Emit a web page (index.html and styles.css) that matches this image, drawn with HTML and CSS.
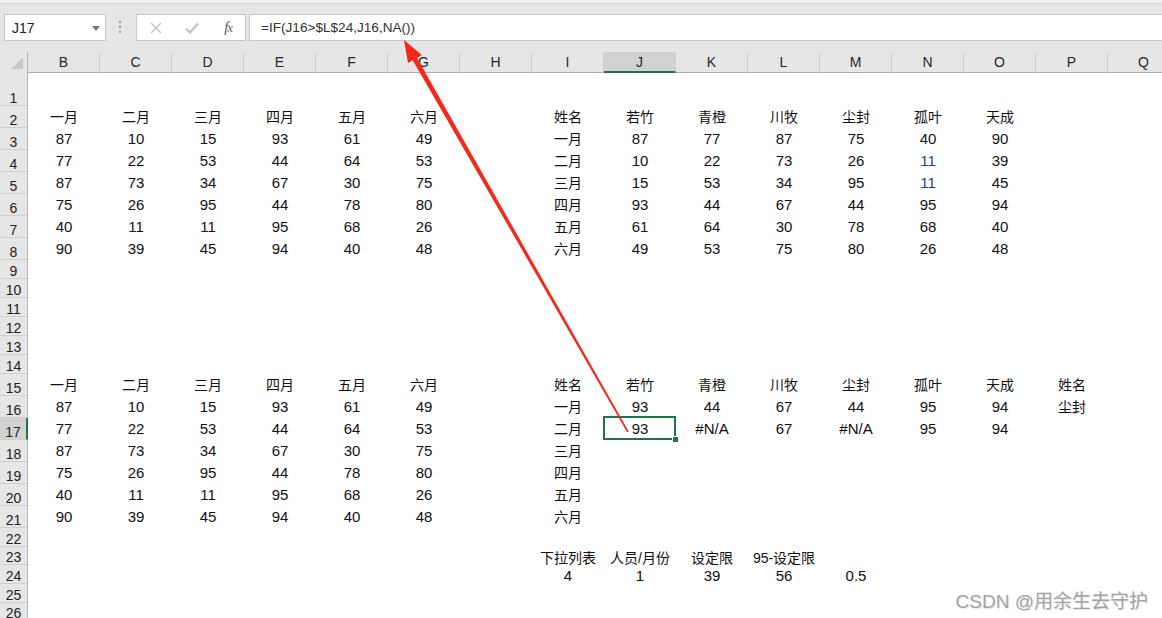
FILE: index.html
```html
<!DOCTYPE html>
<html lang="zh-CN">
<head>
<meta charset="utf-8">
<title>Excel</title>
<link rel="stylesheet" href="styles.css">
</head>
<body>
<div class="top"></div>
<div class="fbar">
  <div class="namebox"><span>J17</span><svg class="dd" width="8" height="5" viewBox="0 0 8 5"><polygon points="0,0 8,0 4,5" fill="#7a7a7a"/></svg></div>
  <svg class="dots" width="4" height="14" viewBox="0 0 4 14"><circle cx="2" cy="2" r="1.2" fill="#a0a0a0"/><circle cx="2" cy="7" r="1.2" fill="#a0a0a0"/><circle cx="2" cy="12" r="1.2" fill="#a0a0a0"/></svg>
  <div class="fxbox">
    <svg class="ic" width="12" height="12" viewBox="0 0 12 12"><path d="M1 1 L11 11 M11 1 L1 11" stroke="#bdbdbd" stroke-width="1.3" fill="none"/></svg>
    <svg class="ic" width="14" height="12" viewBox="0 0 14 12"><path d="M1 6.5 L5 10.5 L13 1.5" stroke="#c2c2c2" stroke-width="2.2" fill="none"/></svg>
    <span class="fx">f<span class="fxx">x</span></span>
  </div>
  <div class="formula">=IF(J16&gt;$L$24,J16,NA())</div>
</div>

<div class="sheet">
  <div class="row hdr">
    <div class="corner"><svg width="13" height="11" viewBox="0 0 13 11"><polygon points="0,11 12,0 12,11" fill="#c6c6c6"/></svg></div>
    <div class="ch">B</div><div class="ch">C</div><div class="ch">D</div><div class="ch">E</div><div class="ch">F</div><div class="ch">G</div><div class="ch">H</div><div class="ch">I</div><div class="ch hsel">J</div><div class="ch">K</div><div class="ch">L</div><div class="ch">M</div><div class="ch">N</div><div class="ch">O</div><div class="ch">P</div><div class="ch">Q</div>
  </div>
  <div class="row r35"><div class="rh">1</div></div>
  <div class="row r22"><div class="rh">2</div><span class="z">一月</span><span class="z">二月</span><span class="z">三月</span><span class="z">四月</span><span class="z">五月</span><span class="z">六月</span><span></span><span class="z">姓名</span><span class="z">若竹</span><span class="z">青橙</span><span class="z">川牧</span><span class="z">尘封</span><span class="z">孤叶</span><span class="z">天成</span></div>
  <div class="row r22"><div class="rh">3</div><span>87</span><span>10</span><span>15</span><span>93</span><span>61</span><span>49</span><span></span><span class="z">一月</span><span>87</span><span>77</span><span>87</span><span>75</span><span>40</span><span>90</span></div>
  <div class="row r22"><div class="rh">4</div><span>77</span><span>22</span><span>53</span><span>44</span><span>64</span><span>53</span><span></span><span class="z">二月</span><span>10</span><span>22</span><span>73</span><span>26</span><span class="blue">11</span><span>39</span></div>
  <div class="row r22"><div class="rh">5</div><span>87</span><span>73</span><span>34</span><span>67</span><span>30</span><span>75</span><span></span><span class="z">三月</span><span>15</span><span>53</span><span>34</span><span>95</span><span class="blue">11</span><span>45</span></div>
  <div class="row r22"><div class="rh">6</div><span>75</span><span>26</span><span>95</span><span>44</span><span>78</span><span>80</span><span></span><span class="z">四月</span><span>93</span><span>44</span><span>67</span><span>44</span><span>95</span><span>94</span></div>
  <div class="row r22"><div class="rh">7</div><span>40</span><span>11</span><span>11</span><span>95</span><span>68</span><span>26</span><span></span><span class="z">五月</span><span>61</span><span>64</span><span>30</span><span>78</span><span>68</span><span>40</span></div>
  <div class="row r22"><div class="rh">8</div><span>90</span><span>39</span><span>45</span><span>94</span><span>40</span><span>48</span><span></span><span class="z">六月</span><span>49</span><span>53</span><span>75</span><span>80</span><span>26</span><span>48</span></div>
  <div class="row r19"><div class="rh">9</div></div>
  <div class="row r19"><div class="rh">10</div></div>
  <div class="row r19"><div class="rh">11</div></div>
  <div class="row r19"><div class="rh">12</div></div>
  <div class="row r19"><div class="rh">13</div></div>
  <div class="row r19"><div class="rh">14</div></div>
  <div class="row r22"><div class="rh">15</div><span class="z">一月</span><span class="z">二月</span><span class="z">三月</span><span class="z">四月</span><span class="z">五月</span><span class="z">六月</span><span></span><span class="z">姓名</span><span class="z">若竹</span><span class="z">青橙</span><span class="z">川牧</span><span class="z">尘封</span><span class="z">孤叶</span><span class="z">天成</span><span class="z">姓名</span></div>
  <div class="row r22"><div class="rh">16</div><span>87</span><span>10</span><span>15</span><span>93</span><span>61</span><span>49</span><span></span><span class="z">一月</span><span>93</span><span>44</span><span>67</span><span>44</span><span>95</span><span>94</span><span class="z">尘封</span></div>
  <div class="row r22"><div class="rh rsel">17</div><span>77</span><span>22</span><span>53</span><span>44</span><span>64</span><span>53</span><span></span><span class="z">二月</span><span class="sel">93</span><span>#N/A</span><span>67</span><span>#N/A</span><span>95</span><span>94</span></div>
  <div class="row r22"><div class="rh">18</div><span>87</span><span>73</span><span>34</span><span>67</span><span>30</span><span>75</span><span></span><span class="z">三月</span></div>
  <div class="row r22"><div class="rh">19</div><span>75</span><span>26</span><span>95</span><span>44</span><span>78</span><span>80</span><span></span><span class="z">四月</span></div>
  <div class="row r22"><div class="rh">20</div><span>40</span><span>11</span><span>11</span><span>95</span><span>68</span><span>26</span><span></span><span class="z">五月</span></div>
  <div class="row r22"><div class="rh">21</div><span>90</span><span>39</span><span>45</span><span>94</span><span>40</span><span>48</span><span></span><span class="z">六月</span></div>
  <div class="row r18"><div class="rh">22</div></div>
  <div class="row r18"><div class="rh">23</div><span></span><span></span><span></span><span></span><span></span><span></span><span></span><span class="z">下拉列表</span><span class="z">人员/月份</span><span class="z">设定限</span><span class="z">95-设定限</span></div>
  <div class="row r18"><div class="rh">24</div><span></span><span></span><span></span><span></span><span></span><span></span><span></span><span>4</span><span>1</span><span>39</span><span>56</span><span>0.5</span></div>
  <div class="row r18"><div class="rh">25</div></div>
  <div class="row r18"><div class="rh">26</div></div>
</div>

<svg class="arrow" width="1162" height="618" viewBox="0 0 1162 618">
  <polygon points="404,40 421.8,55.1 417.1,57.9 628.7,431.6 627.3,432.4 412.7,60.3 408,63.1" fill="#f5281c"/>
</svg>

<div class="wm">CSDN @用余生去守护</div>
</body>
</html>
```

FILE: styles.css
```css
html, body {
  margin: 0;
  padding: 0;
}
body {
  width: 1162px;
  height: 618px;
  overflow: hidden;
  position: relative;
  background: #ffffff;
  font-family: "Liberation Sans", "Noto Sans CJK SC", sans-serif;
  color: #111;
}
.top {
  height: 3px;
  background: #f1f1f1;
  border-bottom: 1px solid #d3d3d3;
}
.fbar {
  height: 48px;
  box-sizing: border-box;
  background: #e6e6e6;
  display: flex;
  align-items: flex-start;
  padding: 10px 0 0 4px;
}
.namebox {
  width: 102px;
  height: 27px;
  box-sizing: border-box;
  border: 1px solid #c6c6c6;
  background: #fff;
  display: flex;
  align-items: center;
  justify-content: space-between;
  padding: 0 5px 0 7px;
  font-size: 14px;
  color: #222;
}
.dd {
  margin-top: 1px;
}
.dots {
  margin: 6px 0 0 12px;
}
.fxbox {
  margin-left: 14px;
  width: 110px;
  height: 27px;
  box-sizing: border-box;
  border: 1px solid #c6c6c6;
  background: #fff;
  display: grid;
  grid-template-columns: 37px 36px 36px;
  align-items: center;
  justify-items: center;
}
.fx {
  font-family: "Liberation Serif", serif;
  font-style: italic;
  font-size: 15px;
  color: #555;
  letter-spacing: -1px;
}
.fxx {
  font-size: 12px;
}
.formula {
  margin-left: 3px;
  flex: 1;
  height: 27px;
  box-sizing: border-box;
  border: 1px solid #c6c6c6;
  border-right: none;
  background: #fff;
  padding-left: 11px;
  font-size: 13.6px;
  line-height: 25px;
  color: #333;
}
.sheet {
  display: flex;
  flex-direction: column;
}
.row {
  display: grid;
  grid-template-columns: 28px repeat(16, 72px);
  font-size: 15px;
  white-space: nowrap;
}
.row span {
  text-align: center;
  position: relative;
}
.hdr {
  height: 19px;
}
.corner {
  box-sizing: border-box;
  border-right: 1px solid #b5b5b5;
  border-bottom: 1px solid #ababab;
  background: #e6e6e6;
  display: flex;
  align-items: flex-end;
  justify-content: flex-end;
  padding: 0 3px 3px 0;
}
.ch {
  box-sizing: border-box;
  background: #e6e6e6;
  border-right: 1px solid #cdcdcd;
  border-bottom: 1px solid #ababab;
  text-align: center;
  font-size: 14px;
  line-height: 18px;
  padding-top: 1px;
  color: #262626;
}
.hsel {
  background: #d2d2d2;
  border-bottom: 2px solid #217346;
}
.rh {
  box-sizing: border-box;
  background: #e6e6e6;
  border-right: 1px solid #b5b5b5;
  border-bottom: 1px solid #d0d0d0;
  display: flex;
  align-items: flex-end;
  justify-content: center;
  font-size: 14px;
  line-height: 14px;
  color: #222;
}
.rsel {
  background: #d2d2d2;
  border-right: 2px solid #217346;
}
.r35 { height: 35px; line-height: 35px; }
.r22 { height: 22px; line-height: 22px; }
.r19 { height: 19px; line-height: 19px; }
.r18 { height: 18.7px; line-height: 18.7px; }
.r18 span {
  top: 2px;
}
.z {
  font-size: 14px;
}
.blue {
  color: #1f3f8f;
}
.sel::after {
  content: "";
  position: absolute;
  left: -1px;
  top: -2px;
  right: 0;
  bottom: 0;
  border: 2px solid #217346;
}
.sel::before {
  content: "";
  position: absolute;
  right: -3px;
  bottom: -3px;
  width: 5px;
  height: 5px;
  background: #217346;
  border: 1px solid #fff;
  z-index: 2;
}
.arrow {
  position: absolute;
  left: 0;
  top: 0;
  pointer-events: none;
}
.wm {
  position: absolute;
  right: 14px;
  top: 586px;
  font-size: 19px;
  color: #a3a3a3;
  text-shadow: 1px 1px 0 #e8e8e8;
  font-family: "Liberation Sans", "Noto Sans CJK SC", sans-serif;
}
```
